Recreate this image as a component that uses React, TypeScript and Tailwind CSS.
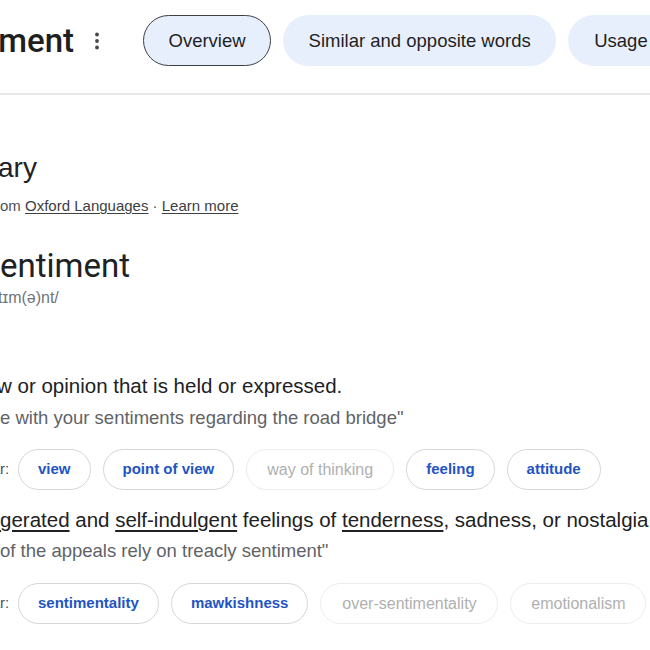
import React from "react";

// Text whose start is cut off by the left edge of the window:
// the hidden part is right-aligned into a zero-width box so it overflows left.
function Cut({ hidden, children, className = "" }: { hidden: string; children: React.ReactNode; className?: string }) {
  return (
    <div className={`flex whitespace-nowrap ${className}`}>
      <span className="flex w-0 shrink-0 justify-end">
        <span>{hidden}</span>
      </span>
      <span>{children}</span>
    </div>
  );
}

type ChipData = { label: string; link?: boolean; w?: string };

function Chip({ label, link, w }: ChipData) {
  return (
    <span
      className={
        link
          ? "flex h-[41px] shrink-0 items-center justify-center rounded-full border border-[#d6d6d6] px-[19px] text-[15px] font-bold text-[#1f55c2]"
          : `flex h-[41px] shrink-0 items-center justify-center rounded-full border border-[#ececec] text-[16px] text-[#b0b0b0] ${w}`
      }
    >
      {label}
    </span>
  );
}

function ChipRow({ chips, className = "" }: { chips: ChipData[]; className?: string }) {
  return (
    <div className={`flex items-center whitespace-nowrap ${className}`}>
      <Cut hidden="Simila" className="w-[10px] text-[15px] text-[#4d5156]">
        r:
      </Cut>
      <div className="ml-[8px] flex gap-3">
        {chips.map((c) => (
          <Chip key={c.label} {...c} />
        ))}
      </div>
    </div>
  );
}

export default function App() {
  return (
    <div className="h-[650px] w-[650px] overflow-hidden bg-white font-['Liberation_Sans',Arial,sans-serif] text-[#202124]">
      {/* header */}
      <div className="flex items-center whitespace-nowrap pt-[15px] pb-[27px]">
        <div className="flex w-[74px] shrink-0 justify-end font-['Roboto',sans-serif] text-[33px] font-medium leading-[51px] text-[#1f1f1f]">
          <span>sentiment</span>
        </div>
        <div className="flex w-[45px] shrink-0 justify-center">
          <svg width="6" height="18" viewBox="0 0 6 18" fill="#444746">
            <circle cx="3" cy="2.5" r="1.9" />
            <circle cx="3" cy="9" r="1.9" />
            <circle cx="3" cy="15.5" r="1.9" />
          </svg>
        </div>
        <div className="ml-[24px] flex gap-3 text-[18.5px] text-[#1f1f1f]">
          <span className="flex h-[51px] shrink-0 items-center rounded-full border-[1.5px] border-[#3c4043] bg-[#e8effc] px-[24.5px]">
            Overview
          </span>
          <span className="flex h-[51px] shrink-0 items-center rounded-full bg-[#e8effc] px-[25.5px]">
            Similar and opposite words
          </span>
          <span className="flex h-[51px] shrink-0 items-center rounded-full bg-[#e8effc] px-[26px]">
            Usage examples
          </span>
        </div>
      </div>
      <div className="h-[2px] bg-[#e8e8e8]" />

      {/* dictionary */}
      <Cut hidden="Diction" className="mt-[55px] -ml-[2px] text-[28px] leading-[36px]">
        ary
      </Cut>
      <Cut hidden="Definitions fr" className="mt-[10px] text-[15px] leading-[20px] text-[#4d5156]">
        om <span className="text-[#3c4043] underline underline-offset-2">Oxford Languages</span> ·{" "}
        <span className="text-[#3c4043] underline underline-offset-2">Learn more</span>
      </Cut>
      <Cut hidden="s" className="mt-[28px] font-['Roboto',sans-serif] text-[33px] leading-[44px]">
        entiment
      </Cut>
      <Cut hidden="/ˈsen" className="-ml-[2px] text-[16px] leading-[20px] text-[#70757a]">
        tɪm(ə)nt/
      </Cut>

      {/* sense 1 */}
      <Cut hidden="a vie" className="mt-[65px] -ml-[3px] text-[20.5px] leading-[26px]">
        w or opinion that is held or expressed.
      </Cut>
      <Cut hidden="&quot;I agre" className="mt-[7px] text-[18.5px] leading-[24px] text-[#5f6368]">
        e with your sentiments regarding the road bridge"
      </Cut>
      <ChipRow
        className="mt-[19px]"
        chips={[
          { label: "view", link: true },
          { label: "point of view", link: true },
          { label: "way of thinking", w: "w-[148px]" },
          { label: "feeling", link: true },
          { label: "attitude", link: true },
        ]}
      />

      {/* sense 2 */}
      <Cut hidden="exag" className="mt-[17px] text-[20.5px] leading-[26px]">
        <span className="underline underline-offset-[3px]">gerated</span> and{" "}
        <span className="underline underline-offset-[3px]">self-indulgent</span> feelings of{" "}
        <span className="underline underline-offset-[3px]">tenderness</span>, sadness, or nostalgia.
      </Cut>
      <Cut hidden="&quot;many" className="mt-[6px] text-[18.5px] leading-[24px] text-[#5f6368]">
        {" "}of the appeals rely on treacly sentiment"
      </Cut>
      <ChipRow
        className="mt-[20px]"
        chips={[
          { label: "sentimentality", link: true },
          { label: "mawkishness", link: true },
          { label: "over-sentimentality", w: "w-[178px]" },
          { label: "emotionalism", w: "w-[136px]" },
        ]}
      />
    </div>
  );
}
